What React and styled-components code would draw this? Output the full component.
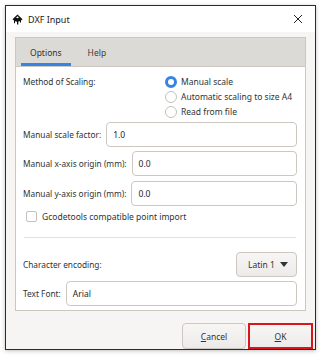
import React from 'react';
import styled, { createGlobalStyle } from 'styled-components';

const Global = createGlobalStyle`
  html, body { margin: 0; padding: 0; background: #fff; }
  body { font-family: "Noto Sans", "DejaVu Sans", sans-serif; font-size: 8.3px; color: #2e3436; }
  * { box-sizing: border-box; }
`;

const Page = styled.div`padding:5px 0 0 5px;width:320px;height:357px;`;
const Window = styled.div`width:311px;height:345px;border:1px solid #2b2b2b;background:#f6f5f4;display:flex;flex-direction:column;box-shadow:0 1px 4px rgba(0,0,0,0.25);`;
const TitleBar = styled.div`height:26px;background:#fff;display:flex;align-items:center;padding:0 0 0 6px;gap:5px;`;
const TitleText = styled.span`flex:1;color:#1b1b1b;font-size:9px;`;
const CloseBtn = styled.div`width:26px;height:26px;display:flex;align-items:center;justify-content:center;margin-right:4px;`;
const Body = styled.div`display:flex;flex-direction:column;padding:5px 9px 0 9px;`;
const Notebook = styled.div`height:274px;display:flex;flex-direction:column;border:1px solid #cdc7c2;`;
const TabBar = styled.div`height:29px;background:#dcdad7;display:flex;padding-left:5px;gap:8px;border-bottom:1px solid #cdc7c2;`;
const Tab = styled.div`padding:0 9px;display:flex;align-items:center;font-size:8.5px;color:${p => p.active ? '#2e3436' : '#3d3d3d'};border-bottom:3px solid ${p => p.active ? '#3584e4' : 'transparent'};padding-top:3px;`;
const Panel = styled.div`flex:1;background:#fff;display:flex;flex-direction:column;padding:7px 8px 3px 7px;`;
const ScaleRow = styled.div`display:flex;`;
const ScaleLabel = styled.div`width:142px;height:15px;display:flex;align-items:center;`;
const RadioGroup = styled.div`display:flex;flex-direction:column;`;
const RadioRow = styled.div`height:15px;display:flex;align-items:center;gap:4px;font-size:8.5px;`;
const Radio = styled.span`width:12px;height:12px;border-radius:50%;border:${p => p.checked ? '3.5px solid #3584e4' : '1px solid #c5c1bc'};background:#fff;`;
const FieldRow = styled.div`display:flex;align-items:center;gap:5px;margin-top:${p => p.mt || 4}px;`;
const Label = styled.span`white-space:nowrap;`;
const Entry = styled.div`flex:1;height:25px;border:1px solid #cdc7c2;border-radius:4px;background:#fff;display:flex;align-items:center;padding:0 6px;color:#1e1e1e;font-size:8.5px;`;
const CheckRow = styled.div`height:16px;display:flex;align-items:center;gap:5px;padding-left:3px;margin-top:2px;font-size:8.5px;`;
const Check = styled.span`width:11px;height:11px;border:1px solid #c5c1bc;border-radius:2px;background:#fff;`;
const Separator = styled.div`height:1px;background:#e3e0dd;margin:13px 1px 14px 1px;`;
const ComboRow = styled.div`display:flex;align-items:center;justify-content:space-between;`;
const Combo = styled.div`width:61px;height:25px;border:1px solid #cdc7c2;border-radius:4px;background:linear-gradient(#f7f6f5,#edebe9);display:flex;align-items:center;justify-content:space-between;padding:0 8px 0 11px;color:#2e3436;font-size:8.5px;`;
const Actions = styled.div`display:flex;justify-content:flex-end;gap:2px;margin-top:12px;padding-right:2px;`;
const Button = styled.div`width:${p => p.w}px;height:26px;border:${p => p.focus ? '2px solid #d9161c' : '1px solid #cdc7c2'};border-radius:${p => p.focus ? '0' : '4px'};background:linear-gradient(#f7f6f5,#edebe9);display:flex;align-items:center;justify-content:center;color:#2e3436;font-size:8.5px;`;
const U = styled.span`text-decoration:underline;`;

const InkscapeIcon = () => (
  <svg width="11" height="11" viewBox="0 0 11 11">
    <path d="M5.5 0.5 L10.5 5.3 L9 6.6 L9 8.6 L8 8.6 L8 7.2 L6.3 7.6 L6.3 10.5 L5 10.5 L5 7.7 L3 7.2 L3 9.3 L2 9.3 L2 6.6 L0.5 5.3 Z" fill="#111" />
    <path d="M4 3.6 L5.5 2.3 L7 3.6 L5.5 4.2 Z" fill="#fff" />
  </svg>
);

const CloseIcon = () => (
  <svg width="10" height="10" viewBox="0 0 10 10">
    <path d="M1 1 L9 9 M9 1 L1 9" stroke="#222" strokeWidth="1" />
  </svg>
);

const fields = [
  { label: 'Manual scale factor:', value: '1.0', mt: 3 },
  { label: 'Manual x-axis origin (mm):', value: '0.0' },
  { label: 'Manual y-axis origin (mm):', value: '0.0', mt: 5 },
];

export default function App() {
  return (
    <Page>
      <Global />
      <Window>
        <TitleBar>
          <InkscapeIcon />
          <TitleText>DXF Input</TitleText>
          <CloseBtn><CloseIcon /></CloseBtn>
        </TitleBar>
        <Body>
          <Notebook>
            <TabBar>
              <Tab active>Options</Tab>
              <Tab>Help</Tab>
            </TabBar>
            <Panel>
              <ScaleRow>
                <ScaleLabel>Method of Scaling:</ScaleLabel>
                <RadioGroup>
                  <RadioRow><Radio checked />Manual scale</RadioRow>
                  <RadioRow><Radio />Automatic scaling to size A4</RadioRow>
                  <RadioRow><Radio />Read from file</RadioRow>
                </RadioGroup>
              </ScaleRow>
              {fields.map(f => (
                <FieldRow key={f.label} mt={f.mt}>
                  <Label>{f.label}</Label>
                  <Entry>{f.value}</Entry>
                </FieldRow>
              ))}
              <CheckRow><Check />Gcodetools compatible point import</CheckRow>
              <Separator />
              <ComboRow>
                <Label>Character encoding:</Label>
                <Combo>
                  Latin 1
                  <svg width="8" height="5" viewBox="0 0 8 5"><path d="M0 0 L8 0 L4 5 Z" fill="#2e3436" /></svg>
                </Combo>
              </ComboRow>
              <FieldRow>
                <Label>Text Font:</Label>
                <Entry>Arial</Entry>
              </FieldRow>
            </Panel>
          </Notebook>
        </Body>
        <Actions>
          <Button w={64}><span><U>C</U>ancel</span></Button>
          <Button w={65} focus><span><U>O</U>K</span></Button>
        </Actions>
      </Window>
    </Page>
  );
}
